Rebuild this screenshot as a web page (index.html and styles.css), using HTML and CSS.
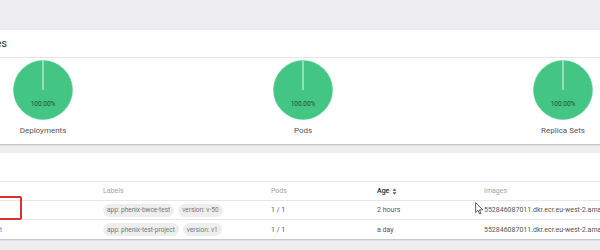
FILE: index.html
```html
<!DOCTYPE html>
<html>
<head>
<meta charset="utf-8">
<link rel="stylesheet" href="styles.css">
</head>
<body>
<div class="page">
  <section class="card">
    <div class="card-head"><div class="title"><span>Workloads Statuses</span></div></div>
    <div class="charts">
      <div class="chart">
        <svg class="pie" width="60" height="60" viewBox="0 0 60 60"><circle cx="30" cy="30" r="29.5" fill="#43c584" stroke="#5fcf97" stroke-width="0.6"/><line x1="30" y1="0.5" x2="30" y2="30" stroke="#e9f7ef" stroke-width="1"/><text x="30" y="45.5" text-anchor="middle" class="pie-text">100.00%</text></svg>
        <div class="chart-label">Deployments</div>
      </div>
      <div class="chart">
        <svg class="pie" width="60" height="60" viewBox="0 0 60 60"><circle cx="30" cy="30" r="29.5" fill="#43c584" stroke="#5fcf97" stroke-width="0.6"/><line x1="30" y1="0.5" x2="30" y2="30" stroke="#e9f7ef" stroke-width="1"/><text x="30" y="45.5" text-anchor="middle" class="pie-text">100.00%</text></svg>
        <div class="chart-label">Pods</div>
      </div>
      <div class="chart">
        <svg class="pie" width="60" height="60" viewBox="0 0 60 60"><circle cx="30" cy="30" r="29.5" fill="#43c584" stroke="#5fcf97" stroke-width="0.6"/><line x1="30" y1="0.5" x2="30" y2="30" stroke="#e9f7ef" stroke-width="1"/><text x="30" y="45.5" text-anchor="middle" class="pie-text">100.00%</text></svg>
        <div class="chart-label">Replica Sets</div>
      </div>
    </div>
  </section>
  <section class="card card-table">
    <div class="card-head card-head-2"></div>
    <div class="row row-head">
      <div class="cell name"></div>
      <div class="cell">Labels</div>
      <div class="cell">Pods</div>
      <div class="cell age">Age <svg class="sort" width="5" height="7" viewBox="0 0 5 7"><path d="M2.5 0.5 L4.5 2.8 L0.5 2.8 Z M2.5 6.5 L4.5 4.2 L0.5 4.2 Z" fill="#555"/></svg></div>
      <div class="cell">Images</div>
    </div>
    <div class="row">
      <div class="cell name"></div>
      <div class="cell"><span class="chip">app: phenix-bwce-test</span><span class="chip">version: v-50</span></div>
      <div class="cell">1 / 1</div>
      <div class="cell">2 hours</div>
      <div class="cell img">552846087011.dkr.ecr.eu-west-2.amazonaws.com/phenix-bwce-test:v-50</div>
    </div>
    <div class="row row-last">
      <div class="cell name"><a class="link">phenix-test-project</a></div>
      <div class="cell"><span class="chip">app: phenix-test-project</span><span class="chip">version: v1</span></div>
      <div class="cell">1 / 1</div>
      <div class="cell">a day</div>
      <div class="cell img">552846087011.dkr.ecr.eu-west-2.amazonaws.com/phenix-test-project:v1</div>
    </div>
    <div class="highlight"></div>
    <svg class="cursor" width="9" height="13" viewBox="0 0 9 13"><path d="M0.6 0.6 L0.6 10.5 L3 8.3 L4.6 12 L6 11.4 L4.5 7.8 L7.8 7.8 Z" fill="#fff" stroke="#333" stroke-width="0.8" stroke-linejoin="round"/></svg>
  </section>
</div>
</body>
</html>
```

FILE: styles.css
```css
html, body {
  margin: 0;
  height: 250px;
  overflow: hidden;
}
body {
  background: #eeedf0;
  font-family: Roboto, "Liberation Sans", sans-serif;
}
.page {
  margin-left: -87px;
  width: 1000px;
  padding-top: 30px;
  display: flex;
  flex-direction: column;
  gap: 9px;
}
.card {
  background: #fff;
  box-shadow: 0 1px 1.5px rgba(0, 0, 0, 0.22);
}
.card-head {
  height: 27px;
  border-bottom: 1px solid #e7e7e7;
  display: flex;
  align-items: center;
  font-size: 11px;
  color: #333;
}
.title {
  width: 94px;
  display: flex;
  justify-content: flex-end;
  white-space: nowrap;
}
.charts {
  display: grid;
  grid-template-columns: repeat(3, 260px);
  padding-top: 2px;
  height: 84px;
}
.chart {
  display: flex;
  flex-direction: column;
  align-items: center;
}
.pie { display: block; }
.pie-text {
  font-size: 6.5px;
  fill: #2d4a3a;
  font-family: Roboto, "Liberation Sans", sans-serif;
}
.chart-label {
  margin-top: 6px;
  font-size: 8px;
  color: #555;
}
.card-table {
  position: relative;
}
.card-head-2 {
  height: 28px;
}
.row {
  display: grid;
  grid-template-columns: 190px 168px 106px 107px 1fr;
  height: 18px;
  align-items: center;
  border-bottom: 1px solid #e7e7e7;
  font-size: 7px;
  color: #555;
  white-space: nowrap;
}
.row-last {
  border-bottom: none;
  height: 19px;
}
.row-head {
  color: #a3a3a3;
}
.cell {
  display: flex;
  align-items: center;
  overflow: hidden;
}
.age {
  color: #222;
  font-weight: 500;
  gap: 3px;
}
.name {
  justify-content: flex-end;
  padding-right: 101px;
}
.link {
  color: #5b8fe0;
}
.chip {
  display: inline-flex;
  align-items: center;
  height: 13px;
  padding: 0 4px;
  margin-right: 4px;
  border-radius: 7px;
  background: #eeeeee;
  color: #777;
  font-size: 6.5px;
}
.img {
  overflow: visible;
}
.highlight {
  position: absolute;
  left: 27px;
  top: 43px;
  width: 78px;
  height: 20px;
  border: 2px solid #d8322e;
  border-radius: 2px;
}
.cursor {
  position: absolute;
  left: 562px;
  top: 49px;
}
```
